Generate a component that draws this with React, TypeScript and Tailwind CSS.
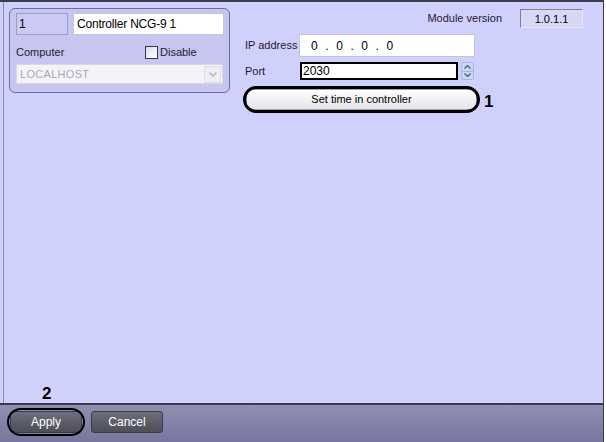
import React from 'react';

const font = "font-['Liberation_Sans',Arial,sans-serif]";

function Spinner() {
  return (
    <div className="w-[13px] h-[18px] ml-[3px] flex flex-col border border-[#a8b8d8] bg-[#c8d8f4] rounded-[2px]">
      <div className="flex-1 flex items-center justify-center border-b border-[#a8b8d8]">
        <svg width="7" height="4" viewBox="0 0 7 4"><path d="M0.5 3.5 L3.5 0.5 L6.5 3.5" fill="none" stroke="#4a5a80" strokeWidth="1.3" /></svg>
      </div>
      <div className="flex-1 flex items-center justify-center">
        <svg width="7" height="4" viewBox="0 0 7 4"><path d="M0.5 0.5 L3.5 3.5 L6.5 0.5" fill="none" stroke="#4a5a80" strokeWidth="1.3" /></svg>
      </div>
    </div>
  );
}

function GroupBox() {
  return (
    <div className="w-[221px] h-[85px] shrink-0 rounded-[6px] border border-[#6c6c9a] bg-[#c6c6f0] pl-[6px] pt-[4px] flex flex-col">
      <div className="flex gap-[5px]">
        <div className="w-[52px] h-[22px] border border-[#9c9cc8] bg-[#cacaf4] px-[2px] flex items-center text-[12px] text-black">1</div>
        <div className="w-[151px] h-[22px] border border-[#c4c4d8] bg-white px-[3px] flex items-center text-[12px] text-black tracking-[-0.2px]">Controller NCG-9 1</div>
      </div>
      <div className="flex items-center h-[18px] mt-[8px] text-[11px] text-[#202030]">
        <span className="w-[52px]">Computer</span>
        <div className="ml-[77px] w-[13px] h-[13px] border border-[#34345a] bg-gradient-to-br from-[#dcdce4] to-white" />
        <span className="ml-[2px]">Disable</span>
      </div>
      <div className="mt-[3px] w-[207px] h-[20px] border border-[#d8d8e0] bg-[#f4f4f8] flex items-center">
        <span className="flex-1 pl-[3px] text-[11px] text-[#a8a8b8] tracking-[0.3px]">LOCALHOST</span>
        <div className="w-[17px] h-[17px] mr-[1px] flex items-center justify-center bg-[#eeeef2] border border-[#dedee6]">
          <svg width="8" height="5" viewBox="0 0 8 5"><path d="M0.5 0.5 L4 4 L7.5 0.5" fill="none" stroke="#b8b8c8" strokeWidth="1.5" /></svg>
        </div>
      </div>
    </div>
  );
}

function RightPanel() {
  return (
    <div className="ml-[15px] w-[338px] flex flex-col text-[#202030]">
      <div className="flex items-center justify-end h-[19px] mt-[1px]">
        <span className="text-[11px]">Module version</span>
        <div className="ml-[18px] w-[63px] h-[19px] border border-t-[#808090] border-l-[#808090] border-r-[#e8e8f8] border-b-[#e8e8f8] bg-[#d8d8f6] flex items-start justify-center text-[11px] text-black pt-[1px]">1.0.1.1</div>
      </div>
      <div className="flex items-center h-[23px] mt-[6px]">
        <span className="w-[54px] text-[11px]">IP address</span>
        <div className="w-[176px] h-[23px] border border-[#c4c4d8] bg-white flex items-center pl-[11px] text-[12px] text-black whitespace-pre tracking-[0.3px]">0  .  0  .  0  .  0</div>
      </div>
      <div className="flex items-center h-[18px] mt-[5px]">
        <span className="w-[55px] text-[11px]">Port</span>
        <div className="w-[158px] h-[18px] border-2 border-black bg-white flex items-center pl-[1px] text-[12px] text-black">2030</div>
        <Spinner />
      </div>
      <div className="relative mt-[9px] flex items-center">
        <div className="ml-[1px] w-[231px] h-[21px] rounded-[4px] border border-[#a0a0b8] bg-gradient-to-b from-white to-[#e4e4e8] flex items-center justify-center text-[11px] text-black">
          Set time in controller
        </div>
        <div className="absolute left-[-2px] top-[-3px] w-[237px] h-[27px] rounded-full border-[3px] border-black" />
        <span className="ml-[7px] text-[17px] font-bold text-black leading-none mt-[3px]">1</span>
      </div>
    </div>
  );
}

function BottomBar() {
  return (
    <div className="relative h-[39px] shrink-0 border-t-2 border-[#383850] bg-gradient-to-b from-[#9090b0] to-[#7676a0] flex items-start pt-[6px] pl-[10px] gap-[9px]">
      <span className="absolute left-[42px] top-[-20px] text-[17px] font-bold text-black leading-none">2</span>
      <div className="relative">
        <button className="block w-[72px] h-[22px] rounded-[3px] border border-[#3c3c48] bg-gradient-to-b from-[#6e6e7c] to-[#4e4e5a] text-white text-[12px]">Apply</button>
        <div className="absolute left-[-3px] top-[-3px] w-[78px] h-[28px] rounded-full border-[2px] border-black" />
      </div>
      <button className="block w-[72px] h-[22px] rounded-[3px] border border-[#3c3c48] bg-gradient-to-b from-[#6e6e7c] to-[#4e4e5a] text-white text-[12px]">Cancel</button>
    </div>
  );
}

export default function App() {
  return (
    <div className={`w-[606px] h-[442px] bg-white flex ${font}`}>
      <div className="w-[604px] h-full flex flex-col bg-[#d0d0fc] border-t-2 border-t-[#3c3c4c] border-r border-r-[#3c3c4c]">
        <div className="flex-1 ml-[3px] border-l border-l-[#8c8cac] flex items-start pt-[6px] pl-[5px]">
          <GroupBox />
          <RightPanel />
        </div>
        <BottomBar />
      </div>
    </div>
  );
}
